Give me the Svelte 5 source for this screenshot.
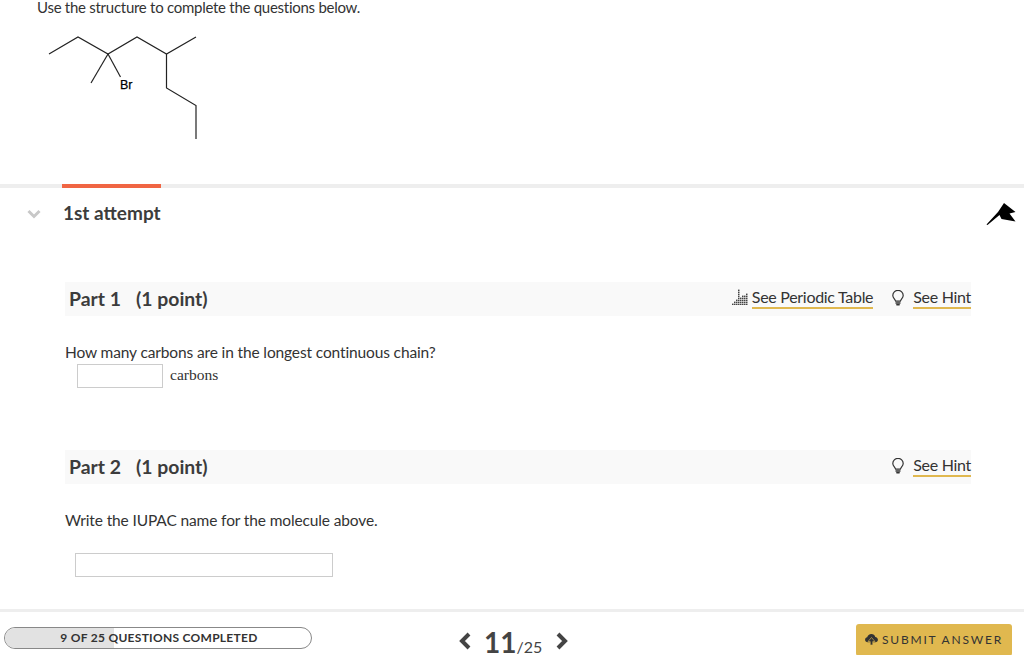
<script lang="ts">
	const parts = [
		{ id: 1, name: 'Part 1', points: '(1 point)', periodic: true },
		{ id: 2, name: 'Part 2', points: '(1 point)', periodic: false }
	];
	const done = 9;
	const total = 25;
	const current = 11;
	let progress = $derived((done / total) * 100 - 0.5);
	// dot rows per column in the periodic table icon
	const columns = [1, 2, 3, 8, 4, 5, 5, 6];
</script>

{#snippet bulb()}
	<svg class="bulb" viewBox="0 0 14 16" width="14" height="16" fill="none" stroke="#333" stroke-width="1.2">
		<path d="M4.600 11.200C4.200 9.200 1.800 8 1.800 5.400a5.200 5 0 0 1 10.400 0c0 2.600-2.400 3.800-2.800 5.800z" />
		<path d="M5 13h4M5.800 14.800h2.400" stroke-width="1.400" stroke-linecap="round" />
	</svg>
{/snippet}

<div class="page">
	<p class="intro">Use the structure to complete the questions below.</p>

	<svg class="molecule" viewBox="0 0 220 160" width="220" height="160" fill="none" stroke="#222" stroke-width="1.2">
		<polyline points="49,54 78,37 108,54 137,37 166.500,54 196,37" />
		<line x1="108" y1="54" x2="91" y2="83" />
		<line x1="108" y1="54" x2="120.500" y2="77" />
		<polyline points="166.500,54 166.500,88 196,105.500 196,139" />
		<text x="120" y="89" font-size="12.500" stroke="#000" stroke-width="0.25" fill="#000">Br</text>
	</svg>

	<div class="tabs"><div class="tab"></div></div>

	<div class="attempt">
		<svg class="chevron" viewBox="0 0 14 10" width="14" height="10" fill="none" stroke="#c8c8c8" stroke-width="3">
			<path d="M1.500 2 7 7.500 12.500 2" />
		</svg>
		<h2>1st attempt</h2>
		<svg class="flag" viewBox="0 0 30 24" width="30" height="24">
			<path d="M0.500 23.500 12 11 18 2 29.500 11 23.500 12.500 29.500 20.500 15.500 18 13.500 14 1.500 24z" fill="#000" />
		</svg>
	</div>

	{#each parts as part (part.id)}
		<section class="part" class:second={part.id === 2}>
			<header class="part-head">
				<strong>{part.name}</strong>
				<strong class="points">{part.points}</strong>
				<div class="links">
					{#if part.periodic}
						<svg class="table" viewBox="0 0 16 16" width="16" height="16" fill="#444">
							{#each columns as rows, c}
								{#each Array(rows) as _, r}
									<rect x={c * 2} y={14.600 - r * 2} width="1.500" height="1.400" />
								{/each}
							{/each}
						</svg>
						<span class="link">See Periodic Table</span>
					{/if}
					{@render bulb()}
					<span class="link">See Hint</span>
				</div>
			</header>

			{#if part.id === 1}
				<p class="question">How many carbons are in the longest continuous chain?</p>
				<div class="answer">
					<input type="text" aria-label="carbons" />
					<span>carbons</span>
				</div>
			{:else}
				<p class="question">Write the IUPAC name for the molecule above.</p>
				<input class="wide" type="text" aria-label="IUPAC name" />
			{/if}
		</section>
	{/each}

	<footer>
		<div class="progress">
			<div class="fill" style="width: {progress}%"></div>
			<span>{done} OF {total} QUESTIONS COMPLETED</span>
		</div>
		<div class="pager">
			<svg viewBox="0 0 12 18" width="12" height="18" fill="none" stroke="#444" stroke-width="4"><path d="M10 2 3 9l7 7" /></svg>
			<span class="now">{current}</span><span class="of">/{total}</span>
			<svg class="next" viewBox="0 0 12 18" width="12" height="18" fill="none" stroke="#444" stroke-width="4"><path d="M2 2l7 7-7 7" /></svg>
		</div>
		<button type="button">
			<svg viewBox="0 0 14 12" width="13" height="11" fill="#333">
				<path d="M3 9C1 9 0 7.600 0 6.200 0 4.800 1 3.800 2.300 3.600 2.800 1.400 4.600 0 6.800 0c2.200 0 3.900 1.400 4.300 3.400C12.800 3.600 14 4.800 14 6.300 14 7.800 13 9 11 9z" />
				<path d="M7 3.800 3.200 8.200H5.600V12H8.400V8.200H10.800z" stroke="#e0b84f" stroke-width="0.700" />
			</svg>
			SUBMIT ANSWER
		</button>
	</footer>
</div>

<style>
	:global(body) {
		margin: 0;
		background: #fff;
	}

	.page {
		width: 1024px;
		height: 655px;
		overflow: hidden;
		font-family: Lato, 'Liberation Sans', sans-serif;
		color: #333;
		display: flex;
		flex-direction: column;
	}

	.intro {
		margin: 0 0 0 37px;
		height: 14px;
		font-size: 15px;
		line-height: 14px;
		letter-spacing: -0.27px;
	}

	.molecule {
		display: block;
		margin-top: -14px;
		flex-shrink: 0;
		font-family: 'Liberation Sans', sans-serif;
	}

	.tabs {
		height: 4px;
		margin-top: 24px;
		background: #eee;
		padding-left: 62px;
		flex-shrink: 0;
	}

	.tab {
		width: 99px;
		height: 4px;
		background: #f06543;
	}

	.attempt {
		display: flex;
		align-items: center;
		height: 50px;
		padding: 0 8px 0 27px;
		flex-shrink: 0;
	}

	.attempt h2 {
		margin: 0 0 2px 22px;
		font-size: 19px;
		font-weight: 700;
		color: #3c3c3c;
		flex: 1;
	}

	.chevron {
		margin-top: 1px;
	}

	.part {
		margin: 44px 53px 0 65px;
	}

	.part.second {
		margin-top: 62px;
	}

	.part-head {
		display: flex;
		align-items: center;
		height: 34px;
		padding-left: 4px;
		background: #f9f9f9;
		font-size: 19.4px;
		color: #3c3c3c;
	}

	.part-head strong {
		margin-bottom: 2px;
	}

	.points {
		margin-left: 15px;
	}

	.links {
		margin-left: auto;
		display: flex;
		align-items: center;
		font-size: 16px;
		letter-spacing: -0.3px;
		color: #333;
	}

	.link {
		border-bottom: 2px solid #e0b84f;
		height: 22px;
		line-height: 24px;
		margin-bottom: 5px;
	}

	.table {
		margin: 0 4px 4px 0;
	}

	.bulb {
		margin: 0 8px 2px 18px;
	}

	.question {
		margin: 27px 0 0;
		font-size: 15.5px;
		line-height: 18px;
		letter-spacing: -0.13px;
	}

	.answer {
		display: flex;
		align-items: center;
		margin: 3px 0 0 12px;
		font-family: 'Liberation Serif', serif;
		font-size: 15.500px;
		color: #333;
	}

	.answer span {
		margin: -2px 0 0 7px;
	}

	input {
		box-sizing: border-box;
		display: block;
		width: 86px;
		height: 24px;
		margin: 0;
		padding: 0;
		border: 1px solid #ccc;
		background: #fff;
	}

	input.wide {
		width: 258px;
		margin: 24px 0 0 10px;
	}

	footer {
		position: relative;
		margin-top: 32px;
		border-top: 3px solid #eee;
		height: 43px;
		display: flex;
		align-items: flex-start;
		flex-shrink: 0;
	}

	.progress {
		position: relative;
		box-sizing: border-box;
		width: 308px;
		height: 22px;
		margin: 15px 0 0 4px;
		padding-left: 2px;
		border: 1px solid #888;
		border-radius: 11px;
		overflow: hidden;
		text-align: center;
		font-size: 12px;
		font-weight: 700;
		letter-spacing: 0.28px;
		line-height: 20px;
		color: #333;
	}

	.progress span {
		position: relative;
	}

	.fill {
		position: absolute;
		left: 0;
		top: 0;
		bottom: 0;
		background: #e2e2e2;
	}

	.pager {
		display: flex;
		align-items: baseline;
		margin: 16px 0 0 147px;
		color: #444;
		line-height: 28px;
	}

	.pager svg {
		align-self: center;
		margin: 0 13px 8px 0;
	}

	.pager .next {
		margin: 0 0 8px 14px;
	}

	.now {
		font-size: 28px;
		font-weight: 700;
	}

	.of {
		font-size: 16px;
	}

	button {
		margin: 12px 12px 0 auto;
		width: 156px;
		height: 32px;
		border: 0;
		border-radius: 3px;
		background: #e0b84f;
		font-family: Lato, sans-serif;
		font-size: 12px;
		letter-spacing: 1.8px;
		color: #333;
		display: flex;
		align-items: center;
		justify-content: center;
		gap: 4px;
		padding: 0 0 2px;
	}
</style>
